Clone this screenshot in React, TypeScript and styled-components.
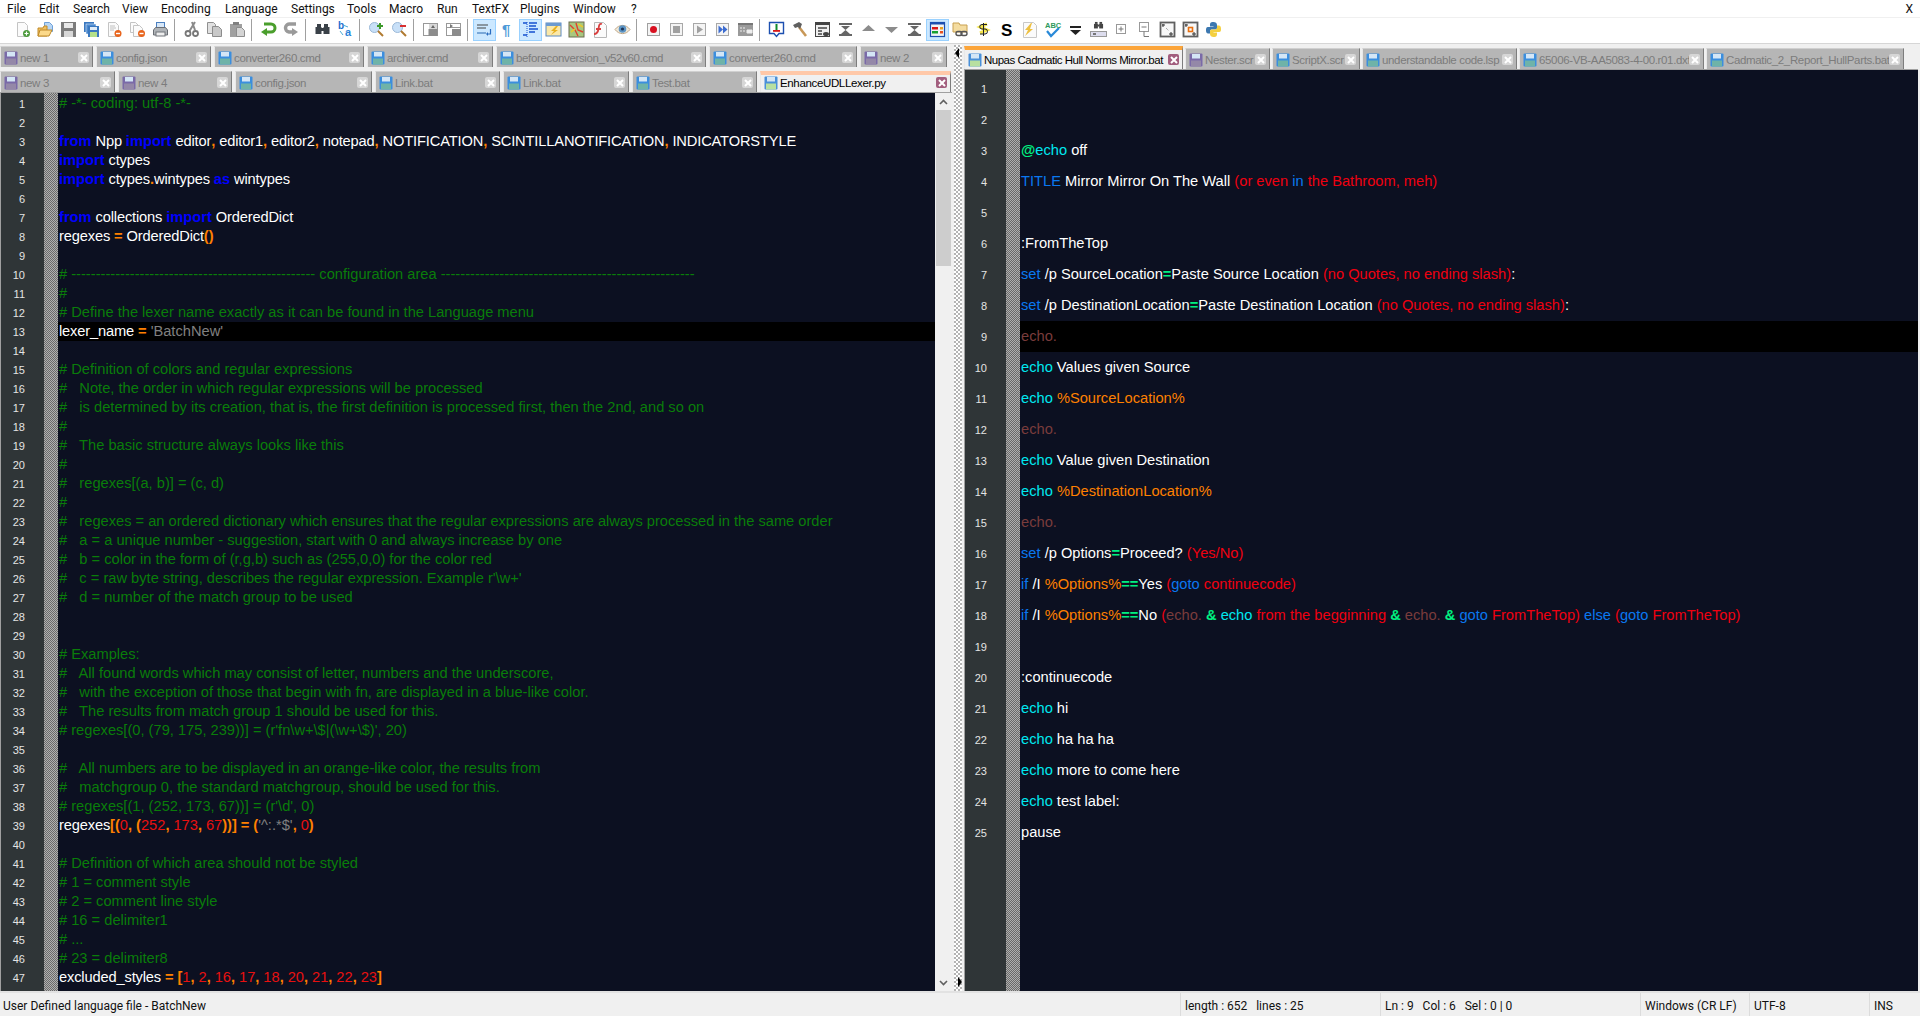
import React from "react";
import styled, { createGlobalStyle } from "styled-components";

const GlobalStyle = createGlobalStyle`
  html, body, #root {
    margin: 0;
    padding: 0;
    height: 100%;
    overflow: hidden;
  }
  body {
    background: #f0f0f0;
    font-family: "Liberation Sans", Arial, sans-serif;
  }
`;

const Window = styled.div`
  height: 100vh;
  display: flex;
  flex-direction: column;
`;

const MenuBar = styled.div`
  height: 17px;
  flex: none;
  display: flex;
  align-items: center;
  background: #fff;
  border-bottom: 1px solid #f0f0f0;
  font-family: Roboto, sans-serif;
  font-size: 12px;
  color: #111;
`;

const MenuItem = styled.span<{ $w: number }>`
  width: ${(p) => p.$w}px;
  flex: none;
  padding-left: 7px;
  box-sizing: border-box;
`;

const CloseApp = styled.span`
  margin-left: auto;
  margin-right: 7px;
  font-size: 12px;
`;

const ToolBar = styled.div`
  height: 26px;
  flex: none;
  box-sizing: border-box;
  display: flex;
  align-items: center;
  padding: 0 0 2px 10.5px;
  background: #fff;
  border-bottom: 1px solid #d6d6d6;
`;

const ToolButton = styled.div<{ $active?: boolean }>`
  width: 23px;
  height: 22px;
  flex: none;
  box-sizing: border-box;
  display: flex;
  align-items: center;
  justify-content: center;
  background: ${(p) => (p.$active ? "#cce8ff" : "transparent")};
  border: 1px solid ${(p) => (p.$active ? "#99d1ff" : "transparent")};
`;

const ToolSep = styled.div`
  width: 8px;
  height: 22px;
  flex: none;
  display: flex;
  justify-content: center;

  &::after {
    content: "";
    width: 1px;
    margin-right: 3px;
    background: #a0a0a0;
  }
`;

const Main = styled.div`
  flex: 1;
  min-height: 0;
  display: flex;
  margin-top: 1px;
`;

const Pane = styled.div<{ $grow?: boolean }>`
  display: flex;
  flex-direction: column;
  min-width: 0;
  ${(p) => (p.$grow ? "flex: 1; margin-right: 2px;" : "width: 952px; flex: none;")}
`;

const TabStrip = styled.div`
  flex: none;
  display: flex;
  flex-direction: column;
  padding-top: 1px;
  gap: 4px;
  border-bottom: 1px solid #a0a0a0;
`;

const TabRow = styled.div<{ $gap: number }>`
  display: flex;
  gap: ${(p) => p.$gap}px;
  align-items: flex-end;
`;

const Tab = styled.div<{ $w: number; $h?: number; $active?: string; $tight?: boolean }>`
  width: ${(p) => p.$w}px;
  height: ${(p) => p.$h ?? 21}px;
  flex: none;
  box-sizing: border-box;
  display: flex;
  align-items: center;
  gap: 2px;
  padding: ${(p) => (p.$active ? (p.$tight ? "0 3px 0 3px" : "0 3px 2px 3px") : "1px 3px 0 3px")};
  font-size: 11.5px;
  letter-spacing: ${(p) => (p.$tight ? "-0.5px" : "-0.35px")};
  overflow: hidden;
  white-space: nowrap;
  color: ${(p) => (p.$active ? "#000" : "#7c7c7c")};
  background: ${(p) => (p.$active ? "#f0f0f0" : "#b6b6b6")};
  border-top: ${(p) => (p.$active ? `4px solid ${p.$active}` : "1px solid #d0d0d0")};
  border-right: 1px solid #7d7d7d;
  border-left: 1px solid #e8e8e8;
`;

const TabLabel = styled.span`
  flex: 1;
  min-width: 0;
`;

const TabClose = styled.span<{ $active?: boolean }>`
  width: 11px;
  height: 11px;
  flex: none;
  border-radius: 2px;
  display: flex;
  align-items: center;
  justify-content: center;
  background: ${(p) => (p.$active ? "#a25e7e" : "#d6d6d6")};
`;

const Editor = styled.div<{ $top: number }>`
  flex: 1;
  min-height: 0;
  display: flex;
  overflow: hidden;
  background: #0c1021;
  border-left: 1px solid #a0a0a0;

  & > div:not([data-bar]) {
    padding-top: ${(p) => p.$top}px;
  }
`;

const Gutter = styled.div<{ $w: number }>`
  width: ${(p) => p.$w}px;
  flex: none;
  box-sizing: border-box;
  background: #2f3537;
  color: #e4e4e4;
  font-size: 11px;
  text-align: right;
  padding-right: 19px;
`;

const FoldMargin = styled.div`
  width: 14px;
  flex: none;
  background: repeating-conic-gradient(#6a6a6a 0 25%, #b0b0b0 0 50%) 0 0 / 2px 2px;
`;

const CodeColumn = styled.div`
  flex: 1;
  min-width: 0;
`;

const Line = styled.div<{ $h: number; $current?: boolean }>`
  height: ${(p) => p.$h}px;
  line-height: ${(p) => p.$h}px;
  white-space: pre;
  overflow: hidden;
  font-size: 14.67px;
  padding-left: 1px;
  color: #fff;
  background: ${(p) => (p.$current ? "#000" : "transparent")};
`;

const LineNo = styled.div<{ $h: number }>`
  height: ${(p) => p.$h}px;
  line-height: ${(p) => p.$h + 1}px;
`;

const tokenColors = {
  c: "#0a7d0a",
  k: "#0000ff",
  d: "#ffffff",
  p: "#ffffff",
  o: "#ff8000",
  s: "#808080",
  n: "#e81010",
  cy: "#00e8f0",
  bl: "#0a78f0",
  r: "#f00010",
  g: "#00f080",
  m: "#7a3c3c",
  v: "#ff8000",
};

type Kind = keyof typeof tokenColors;
type Tk = [Kind, string];

const Tok = styled.span<{ $k: Kind }>`
  color: ${(p) => tokenColors[p.$k]};
  font-weight: ${(p) => (p.$k === "o" || p.$k === "g" || p.$k === "k" ? "bold" : "normal")};
  letter-spacing: ${(p) => (p.$k === "p" ? "-0.15px" : "normal")};
`;

const ScrollBar = styled.div`
  width: 17px;
  flex: none;
  display: flex;
  flex-direction: column;
  background: #f0f0f0;
  margin-left: auto;
`;

const ScrollBtn = styled.div`
  height: 17px;
  flex: none;
  display: flex;
  align-items: center;
  justify-content: center;
`;

const ScrollThumb = styled.div`
  height: 156px;
  flex: none;
  margin: 0 1px;
  background: #cdcdcd;
`;

const ScrollTrack = styled.div`
  flex: 1;
`;

const Splitter = styled.div`
  width: 12px;
  flex: none;
  position: relative;
  background: #f0f0f0;

  &::before {
    content: "";
    position: absolute;
    left: 2px;
    top: 0;
    bottom: 0;
    width: 8px;
    background: repeating-conic-gradient(#fff 0 25%, #b4b4b4 0 50%) 0 0 / 4px 4px;
  }
`;

const SplitArrow = styled.span<{ $down?: boolean }>`
  position: absolute;
  left: 3px;
  width: 0;
  height: 0;
  border-top: 5px solid transparent;
  border-bottom: 5px solid transparent;
  ${(p) =>
    p.$down
      ? "bottom: 4px; left: 6px; border-left: 4px solid #000;"
      : "top: 3px; border-right: 4px solid #000;"}
`;

const StatusBar = styled.div`
  height: 23px;
  flex: none;
  display: flex;
  align-items: center;
  background: #f0f0f0;
  border-top: 2px solid #e2e2e2;
  font-family: Roboto, sans-serif;
  font-size: 12px;
  color: #111;
`;

const StatusCell = styled.div<{ $w: number; $first?: boolean }>`
  width: ${(p) => p.$w}px;
  height: 100%;
  flex: none;
  box-sizing: border-box;
  display: flex;
  align-items: center;
  white-space: pre;
  padding: 3px 0 0 ${(p) => (p.$first ? 3 : 4)}px;
  border-left: ${(p) => (p.$first ? "none" : "1px solid #dcdcdc")};
`;

const Floppy = ({ color = "#3b8ede", label = "#6fb3a8" }: { color?: string; label?: string }) => (
  <svg width="14" height="14" viewBox="0 0 14 14" style={{ flex: "none" }}>
    <rect x="0.5" y="0.5" width="13" height="13" rx="1" fill={color} />
    <rect x="3" y="1" width="8" height="4.5" fill="#d4e6f6" />
    <rect x="2" y="7.5" width="10" height="6" fill={label} />
  </svg>
);

const CloseMark = () => (
  <svg width="8" height="8" viewBox="0 0 8 8">
    <path d="M1 1l6 6M7 1L1 7" stroke="#fff" strokeWidth="2" />
  </svg>
);

const Chevron = ({ down }: { down?: boolean }) => (
  <svg width="9" height="6" viewBox="0 0 9 6">
    <path d={down ? "M1 1l3.5 3.5L8 1" : "M1 5l3.5-3.5L8 5"} fill="none" stroke="#606060" strokeWidth="1.6" />
  </svg>
);

const Ico = ({ children }: { children: React.ReactNode }) => (
  <svg width="17" height="17" viewBox="0 0 17 17" style={{ overflow: "visible" }}>
    {children}
  </svg>
);

const Page = ({ x = 2, y = 1, w = 10, h = 14, s = "#c4c4c4" }) => (
  <path d={`M${x + 0.5} ${y + 0.5}h${w - 3}l3 3v${h - 3}h-${w}z`} fill="#fbfbfb" stroke={s} />
);

const Bin = ({ c = "#3a4148" }) => (
  <g fill={c}>
    <rect x="3" y="3" width="4" height="3" />
    <rect x="10" y="3" width="4" height="3" />
    <rect x="1.5" y="6" width="6" height="7" />
    <rect x="9.5" y="6" width="6" height="7" />
    <rect x="7" y="7" width="3" height="3" />
  </g>
);

const icons: Record<string, React.ReactNode> = {
  newFile: (
    <>
      <Page x={3} w={10} h={14} />
      <circle cx="12.5" cy="12.5" r="3.5" fill="#4c9a3c" />
      <path d="M12.5 10.5v4M10.5 12.5h4" stroke="#fff" strokeWidth="1.2" />
    </>
  ),
  open: (
    <>
      <path d="M7.5 1.5h5l3 3v6h-8z" fill="#b8d6f4" stroke="#6ea0d8" />
      <path d="M1 7h5l1-2h3v10H1z" fill="#f0c060" stroke="#c08a28" />
      <path d="M1 15l2-6h12l-3 6z" fill="#fbd98a" stroke="#c08a28" />
    </>
  ),
  save: (
    <>
      <rect x="1" y="1" width="15" height="15" fill="#7c7c7c" />
      <rect x="4" y="2" width="9" height="5" fill="#e8e8e8" />
      <rect x="4" y="10" width="9" height="6" fill="#d8d8d8" />
    </>
  ),
  saveAll: (
    <>
      <rect x="1" y="1" width="10" height="10" fill="#3a78c0" />
      <rect x="3" y="3" width="10" height="10" fill="#4c8ad0" stroke="#fff" strokeWidth="0.5" />
      <rect x="5" y="5" width="11" height="11" fill="#3a78c0" />
      <rect x="7" y="6" width="7" height="3" fill="#e0ecf8" />
      <rect x="7" y="11" width="7" height="5" fill="#b4e08a" />
    </>
  ),
  close: (
    <>
      <Page x={2} w={10} h={14} />
      <path d="M4 5h5M4 7h6M4 9h4" stroke="#c0c0c0" />
      <circle cx="12" cy="12.5" r="3.5" fill="#e8641c" />
      <path d="M10 12.5h4" stroke="#fff" strokeWidth="1.4" />
    </>
  ),
  closeAll: (
    <>
      <Page x={1} w={8} h={10} />
      <Page x={4} y={4} w={9} h={11} />
      <circle cx="12.5" cy="12.5" r="3.5" fill="#e8641c" />
      <path d="M10.5 12.5h4" stroke="#fff" strokeWidth="1.4" />
    </>
  ),
  print: (
    <>
      <rect x="4.5" y="1.5" width="8" height="6" fill="#d8e8f8" stroke="#4c80c0" />
      <path d="M1.5 9l2-2.500h10l2 2.500v5h-14z" fill="#b0b4b8" stroke="#6a6e74" />
      <rect x="4" y="11" width="9" height="4" fill="#eee" stroke="#70747a" />
    </>
  ),
  cut: (
    <>
      <path d="M12 1L6.500 10M9 1l3 8" stroke="#8a8a8a" strokeWidth="2" fill="none" />
      <circle cx="5" cy="12.500" r="2.500" fill="none" stroke="#777" strokeWidth="1.800" />
      <circle cx="12.500" cy="12.500" r="2.500" fill="none" stroke="#777" strokeWidth="1.800" />
    </>
  ),
  copy: (
    <>
      <path d="M1.500 1.500h6l2 2v9h-8z" fill="#e0e0e0" stroke="#909090" />
      <path d="M6.500 5.500h6l3 3v7h-9z" fill="#c8c8c8" stroke="#8c8c8c" />
    </>
  ),
  paste: (
    <>
      <rect x="1" y="3" width="12" height="13" fill="#a0a0a0" />
      <rect x="4" y="1" width="6" height="3" fill="#808080" />
      <path d="M7.500 6.500h5l3 3v6h-8z" fill="#d4d4d4" stroke="#8c8c8c" />
    </>
  ),
  undo: (
    <>
      <path d="M4 3h7a3.500 3.500 0 0 1 0 8H6" fill="none" stroke="#4a9e2c" strokeWidth="3" />
      <path d="M7 7v8L1 11z" fill="#4a9e2c" />
    </>
  ),
  redo: (
    <>
      <path d="M13 3H7a3.500 3.500 0 0 0-1 8h3" fill="none" stroke="#9a9a9a" strokeWidth="3.400" />
      <path d="M9 7v8l6-4z" fill="#9a9a9a" />
    </>
  ),
  find: <Bin />,
  replace: (
    <>
      <text x="1" y="8" fontSize="10" fontWeight="bold" fill="#1c6fd0">b</text>
      <text x="8" y="15" fontSize="11" fontWeight="bold" fill="#2a82d8">a</text>
      <path d="M3 10l3 4M6 4l5 2" stroke="#4caad8" fill="none" />
    </>
  ),
  zoomIn: (
    <>
      <circle cx="6.500" cy="6.500" r="5" fill="#c8e0f8" stroke="#9ab8d8" />
      <path d="M10 10l5 5" stroke="#b07a30" strokeWidth="2" />
      <path d="M12 2v6M9 5h6" stroke="#3c9a2c" strokeWidth="2" />
    </>
  ),
  zoomOut: (
    <>
      <circle cx="6.500" cy="6.500" r="5" fill="#c8e0f8" stroke="#9ab8d8" />
      <path d="M10 10l5 5" stroke="#b07a30" strokeWidth="2" />
      <path d="M9 5h6" stroke="#d83030" strokeWidth="2" />
    </>
  ),
  syncV: (
    <>
      <rect x="1.500" y="2.500" width="14" height="12" fill="none" stroke="#999" />
      <path d="M7 3h8v11H7z" fill="#d8d8d8" />
      <rect x="6.500" y="8" width="9" height="7" fill="#8c8c8c" />
      <path d="M9 7l2-3 2 3z" fill="#666" />
    </>
  ),
  syncH: (
    <>
      <rect x="1.500" y="2.500" width="14" height="12" fill="none" stroke="#999" />
      <rect x="1" y="6" width="15" height="1" fill="#999" />
      <rect x="7" y="8" width="9" height="7" fill="#8c8c8c" />
      <path d="M5 3l3 2-3 2z" fill="#777" />
    </>
  ),
  wrap: (
    <>
      <path d="M1 4h11M1 7h9" stroke="#444" strokeWidth="1.200" />
      <rect x="1" y="11" width="9" height="2" fill="#7aa8d8" />
      <path d="M14.500 8v5H11" fill="none" stroke="#2a6cc0" strokeWidth="1.200" />
      <path d="M12 11v4l-2-2z" fill="#2a6cc0" />
    </>
  ),
  para: <text x="3" y="14" fontSize="15" fontWeight="bold" fill="#4f9ad8">¶</text>,
  indent: (
    <>
      <path d="M5 1v15" stroke="#1450d0" strokeDasharray="1 1" />
      <path d="M1 2h4M7 2h8M7 5h7M7 8h9M7 11h6M1 14h4" stroke="#1450d0" strokeWidth="1.600" />
    </>
  ),
  udl: (
    <>
      <rect x="1" y="2" width="15" height="13" fill="#fbe8a8" stroke="#5c8ac0" />
      <rect x="1" y="2" width="15" height="3" fill="#6c9ad0" />
      <path d="M11 5L6 10h3l-3 4 7-5h-3l3-4z" fill="#e8b020" />
    </>
  ),
  map: (
    <>
      <rect x="1" y="1" width="15" height="15" fill="#a8c880" stroke="#6c6c50" />
      <path d="M2 4l5 5 3 6M8 2l2 7 5 2" fill="none" stroke="#e04030" strokeWidth="1.400" />
      <path d="M3 11l4-3M10 3l5 3" stroke="#e8c830" strokeWidth="1.600" />
    </>
  ),
  func: (
    <>
      <Page x={3} w={12} h={15} s="#b8b8b8" />
      <path d="M11 3c-3-1-3 2-3.500 5S6 13 3 13M5 8h5" fill="none" stroke="#d84040" strokeWidth="1.800" />
    </>
  ),
  eye: (
    <>
      <path d="M1 8.500C5 3 12 3 16 8.500 12 14 5 14 1 8.500z" fill="#f0e8d8" stroke="#c0a888" />
      <circle cx="8.500" cy="8" r="3.800" fill="#5c94c4" />
      <circle cx="8.500" cy="8" r="1.600" fill="#1c3458" />
    </>
  ),
  record: (
    <>
      <rect x="2.500" y="2.500" width="12" height="12" fill="#f4f4f4" stroke="#a0a0a0" />
      <circle cx="8.500" cy="8.500" r="3.500" fill="#d81020" />
    </>
  ),
  stop: (
    <>
      <rect x="2.500" y="2.500" width="12" height="12" fill="#f4f4f4" stroke="#a8a8a8" />
      <rect x="5" y="5" width="7" height="7" fill="#a0a0a0" />
    </>
  ),
  play: (
    <>
      <rect x="2.500" y="2.500" width="12" height="12" fill="#f4f4f4" stroke="#a8a8a8" />
      <path d="M6 4.500l6 4-6 4z" fill="#a0a0a0" />
    </>
  ),
  playMany: (
    <>
      <rect x="2.500" y="2.500" width="12" height="12" fill="#f4f4f4" stroke="#a8a8a8" />
      <path d="M4.500 4.500l4.500 4-4.500 4zM9 4.500l4.500 4-4.500 4z" fill="#3c6cd0" />
    </>
  ),
  saveMacro: (
    <>
      <rect x="1" y="2" width="15" height="13" fill="#9a9a9a" />
      <rect x="1" y="2" width="15" height="2" fill="#777" />
      <path d="M3 7h2M6 7h2M3 10h2M6 10h2M10 9h5v3h-5z" stroke="#eee" fill="#eee" />
    </>
  ),
  bubble: (
    <>
      <path d="M1.500 1.500h14v11h-4.500l-2.500 3-2.500-3h-4.500z" fill="#fff" stroke="#1c4fb0" strokeWidth="1.400" />
      <rect x="7.500" y="3" width="2" height="6" fill="#118a2c" />
      <rect x="5" y="9" width="7" height="1.800" fill="#d81818" />
    </>
  ),
  hammer: (
    <>
      <path d="M8 6l7 9" stroke="#c89858" strokeWidth="2.600" />
      <path d="M2 4l6-3 3 2-2 5-2-2-3 1z" fill="#606060" />
    </>
  ),
  panel: (
    <>
      <rect x="1.500" y="1.500" width="14" height="14" fill="#f0f0f0" stroke="#444" />
      <rect x="1" y="1" width="15" height="3" fill="#444" />
      <path d="M4 7h9M4 10h4M4 13h4" stroke="#444" strokeWidth="1.400" />
      <ellipse cx="12" cy="13" rx="3" ry="2" fill="#444" />
    </>
  ),
  hourA: <path d="M2 2h13v2H2zM4 5h9L8.500 9zM8.500 9l4.500 4H4zM2 13h13v2H2z" fill="#666" />,
  up: <path d="M8.500 4l6.500 6H2z" fill="#8c8c8c" />,
  down: <path d="M2 6h13l-6.500 6z" fill="#8c8c8c" />,
  active: (
    <>
      <rect x="1.500" y="1.500" width="14" height="14" fill="#f4f4f4" stroke="#1c4fb0" strokeWidth="1.200" />
      <rect x="1" y="1" width="15" height="2.500" fill="#1c4fb0" />
      <rect x="3" y="6" width="6" height="2.500" fill="#d81818" />
      <rect x="3" y="10" width="6" height="2.500" fill="#18a030" />
      <rect x="11" y="6" width="3" height="2.500" fill="#e8a020" />
      <rect x="11" y="10" width="3" height="2.500" fill="#e85020" />
    </>
  ),
  chain: (
    <>
      <path d="M1 2h6l1 2h7v7H1z" fill="#f4dca0" stroke="#c8a050" />
      <rect x="4" y="10.500" width="6" height="4" rx="2" fill="none" stroke="#555" strokeWidth="1.400" />
      <rect x="9" y="10.500" width="6" height="4" rx="2" fill="none" stroke="#555" strokeWidth="1.400" />
    </>
  ),
  dollar: (
    <>
      <path d="M12 3L5 6l7 3-7 3" fill="none" stroke="#f4e44c" strokeWidth="3" />
      <path d="M12 3.500H7a2 2 0 0 0 0 4.500h3a2.500 2.500 0 0 1 0 5H5M8.500 2v13" fill="none" stroke="#222" strokeWidth="1" />
    </>
  ),
  esS: <text x="3" y="15" fontSize="17" fontWeight="bold" fill="#000" fontFamily="Liberation Sans">S</text>,
  bolt: (
    <>
      <Page x={2} w={13} h={15} s="#c8c8c8" />
      <path d="M10 2L4 9h3l-3 6 8-7H9l2-6z" fill="#eec040" />
    </>
  ),
  spell: (
    <>
      <text x="1" y="7" fontSize="7.500" fontWeight="bold" fill="#2e9a5c">ABC</text>
      <path d="M3 10l4 5 8-8" fill="none" stroke="#2a8ad8" strokeWidth="2.200" />
    </>
  ),
  drop: (
    <>
      <rect x="3" y="5" width="11" height="2" fill="#222" />
      <path d="M3 9h11l-5.500 5z" fill="#222" />
    </>
  ),
  binInput: (
    <>
      <g transform="translate(3 -1) scale(0.65)"><Bin c="#444" /></g>
      <rect x="0.500" y="10.500" width="16" height="5" fill="#dde" stroke="#999" />
      <rect x="3" y="12" width="3" height="2" fill="#777" />
    </>
  ),
  plusBox: (
    <>
      <rect x="3.500" y="3.500" width="9" height="9" fill="none" stroke="#999" />
      <path d="M8 5.500v5M5.500 8h5" stroke="#777" />
    </>
  ),
  minusBox: (
    <>
      <rect x="3.500" y="1.500" width="9" height="9" fill="none" stroke="#999" />
      <path d="M5.500 6h5M8 10.500v5h5" stroke="#777" fill="none" />
    </>
  ),
  dotBox: (
    <>
      <rect x="1.500" y="1.500" width="14" height="14" fill="#f8f8f8" stroke="#606060" strokeWidth="1.800" />
      <path d="M4 3v3M3 4h3M12 11v4M10 13h4" stroke="#333" />
      <path d="M7 7l3 3" stroke="#888" strokeDasharray="1 1" />
    </>
  ),
  orangeBox: (
    <>
      <rect x="1.500" y="1.500" width="14" height="14" fill="#f8f8f8" stroke="#606060" strokeWidth="1.800" />
      <path d="M4 3v3M3 4h3M12 11v4M10 13h4" stroke="#333" />
      <rect x="6.500" y="6.500" width="4" height="4" fill="none" stroke="#e87010" strokeWidth="1.600" />
    </>
  ),
  python: (
    <>
      <path d="M8.500 1C5 1 5 2.500 5 4v1.500h3.500V6H3C1 6 1 8 1 9s0 3.500 2.500 3.500H5V10.500C5 9 6 8.500 7 8.500h3.500c1 0 1.500-1 1.500-2V4c0-2-1.500-3-3.500-3z" fill="#3c78b0" />
      <path d="M8.500 16c3.500 0 3.500-1.500 3.500-3v-1.500H8.500V11H14c2 0 2-2 2-3s0-3.500-2.500-3.500H12V6.500c0 1.500-1 2-2 2H6.500c-1 0-1.500 1-1.500 2V13c0 2 1.500 3 3.500 3z" fill="#f4d040" />
    </>
  ),
};

const toolbarGroups: (string | [string])[][] = [
  ["newFile", "open", "save", "saveAll", "close", "closeAll", "print"],
  ["cut", "copy", "paste"],
  ["undo", "redo"],
  ["find", "replace"],
  ["zoomIn", "zoomOut"],
  ["syncV", "syncH"],
  [["wrap"], "para", ["indent"], "udl", "map", "func", "eye"],
  ["record", "stop", "play", "playMany", "saveMacro"],
  ["bubble", "hammer", "panel", "hourA", "up", "down", "hourA", ["active"], "chain", "dollar", "esS", "bolt", "spell", "drop", "binInput", "plusBox", "minusBox", "dotBox", "orangeBox", "python"],
];

const menus: [string, number][] = [
  ["File", 32],
  ["Edit", 34],
  ["Search", 49],
  ["View", 39],
  ["Encoding", 64],
  ["Language", 66],
  ["Settings", 56],
  ["Tools", 42],
  ["Macro", 48],
  ["Run", 35],
  ["TextFX", 48],
  ["Plugins", 53],
  ["Window", 58],
  ["?", 20],
];

type TabDef = { name: string; w: number; unsaved?: boolean };

const rowOne: TabDef[] = [
  { name: "new 1", w: 93, unsaved: true },
  { name: "config.json", w: 115 },
  { name: "converter260.cmd", w: 150 },
  { name: "archiver.cmd", w: 126 },
  { name: "beforeconversion_v52v60.cmd", w: 210 },
  { name: "converter260.cmd", w: 148 },
  { name: "new 2", w: 87, unsaved: true },
];

const rowTwo: TabDef[] = [
  { name: "new 3", w: 115, unsaved: true },
  { name: "new 4", w: 114, unsaved: true },
  { name: "config.json", w: 137 },
  { name: "Link.bat", w: 125 },
  { name: "Link.bat", w: 126 },
  { name: "Test.bat", w: 125 },
];

const rightTabs: TabDef[] = [
  { name: "Nester.scr", w: 85, unsaved: true },
  { name: "ScriptX.scr", w: 88 },
  { name: "understandable code.lsp", w: 155 },
  { name: "65006-VB-AA5083-4-00.r01.dxf", w: 185 },
  { name: "Cadmatic_2_Report_HullParts.bat", w: 198 },
];

const dashesA = "-".repeat(50);
const dashesB = "-".repeat(52);

const pyLines: (string | Tk[])[] = [
  "# -*- coding: utf-8 -*-",
  "",
  [["k", "from"], ["p", " Npp "], ["k", "import"], ["p", " editor"], ["o", ","], ["p", " editor1"], ["o", ","], ["p", " editor2"], ["o", ","], ["p", " notepad"], ["o", ","], ["p", " NOTIFICATION"], ["o", ","], ["p", " SCINTILLANOTIFICATION"], ["o", ","], ["p", " INDICATORSTYLE"]],
  [["k", "import"], ["p", " ctypes"]],
  [["k", "import"], ["p", " ctypes"], ["o", "."], ["p", "wintypes "], ["k", "as"], ["p", " wintypes"]],
  "",
  [["k", "from"], ["p", " collections "], ["k", "import"], ["p", " OrderedDict"]],
  [["p", "regexes "], ["o", "="], ["p", " OrderedDict"], ["o", "()"]],
  "",
  `# ${dashesA} configuration area ${dashesB}`,
  "#",
  "# Define the lexer name exactly as it can be found in the Language menu",
  [["p", "lexer_name "], ["o", "="], ["s", " 'BatchNew'"]],
  "",
  "# Definition of colors and regular expressions",
  "#   Note, the order in which regular expressions will be processed",
  "#   is determined by its creation, that is, the first definition is processed first, then the 2nd, and so on",
  "#",
  "#   The basic structure always looks like this",
  "#",
  "#   regexes[(a, b)] = (c, d)",
  "#",
  "#   regexes = an ordered dictionary which ensures that the regular expressions are always processed in the same order",
  "#   a = a unique number - suggestion, start with 0 and always increase by one",
  "#   b = color in the form of (r,g,b) such as (255,0,0) for the color red",
  "#   c = raw byte string, describes the regular expression. Example r'\\w+'",
  "#   d = number of the match group to be used",
  "",
  "",
  "# Examples:",
  "#   All found words which may consist of letter, numbers and the underscore,",
  "#   with the exception of those that begin with fn, are displayed in a blue-like color.",
  "#   The results from match group 1 should be used for this.",
  "# regexes[(0, (79, 175, 239))] = (r'fn\\w+\\$|(\\w+\\$)', 20)",
  "",
  "#   All numbers are to be displayed in an orange-like color, the results from",
  "#   matchgroup 0, the standard matchgroup, should be used for this.",
  "# regexes[(1, (252, 173, 67))] = (r'\\d', 0)",
  [["p", "regexes"], ["o", "[("], ["n", "0"], ["o", ","], ["p", " "], ["o", "("], ["n", "252"], ["o", ","], ["p", " "], ["n", "173"], ["o", ","], ["p", " "], ["n", "67"], ["o", "))]"], ["p", " "], ["o", "="], ["p", " "], ["o", "("], ["s", "'^:.*$'"], ["o", ","], ["p", " "], ["n", "0"], ["o", ")"]],
  "",
  "# Definition of which area should not be styled",
  "# 1 = comment style",
  "# 2 = comment line style",
  "# 16 = delimiter1",
  "# ...",
  "# 23 = delimiter8",
  [["p", "excluded_styles "], ["o", "="], ["p", " "], ["o", "["], ["n", "1"], ["o", ","], ["p", " "], ["n", "2"], ["o", ","], ["p", " "], ["n", "16"], ["o", ","], ["p", " "], ["n", "17"], ["o", ","], ["p", " "], ["n", "18"], ["o", ","], ["p", " "], ["n", "20"], ["o", ","], ["p", " "], ["n", "21"], ["o", ","], ["p", " "], ["n", "22"], ["o", ","], ["p", " "], ["n", "23"], ["o", "]"]],
];

const echoLine = (text: string): Tk[] => [["cy", "echo"], ["d", " " + text]];
const echoVar = (name: string): Tk[] => [["cy", "echo"], ["d", " "], ["v", name]];
const setLine = (name: string, value: string): Tk[] => [["bl", "set"], ["d", ` /p ${name}`], ["g", "="], ["d", value]];
const noQuotes: Tk[] = [["d", " "], ["r", "(no Quotes, no ending slash)"], ["d", ":"]];
const blank: Tk[] = [];
const dot: Tk[] = [["m", "echo."]];

const batLines: Tk[][] = [
  blank,
  blank,
  [["g", "@"], ["cy", "echo"], ["d", " off"]],
  [["bl", "TITLE"], ["d", " Mirror Mirror On The Wall "], ["r", "(or even "], ["bl", "in"], ["r", " the Bathroom, meh)"]],
  blank,
  [["d", ":FromTheTop"]],
  [...setLine("SourceLocation", "Paste Source Location"), ...noQuotes],
  [...setLine("DestinationLocation", "Paste Destination Location"), ...noQuotes],
  dot,
  echoLine("Values given Source"),
  echoVar("%SourceLocation%"),
  dot,
  echoLine("Value given Destination"),
  echoVar("%DestinationLocation%"),
  dot,
  [...setLine("Options", "Proceed? "), ["r", "(Yes/No)"]],
  [["bl", "if"], ["d", " /I "], ["v", "%Options%"], ["g", "=="], ["d", "Yes "], ["r", "("], ["bl", "goto"], ["r", " continuecode)"]],
  [["bl", "if"], ["d", " /I "], ["v", "%Options%"], ["g", "=="], ["d", "No "], ["r", "("], ["m", "echo. "], ["g", "&"], ["cy", " echo"], ["r", " from the begginning "], ["g", "&"], ["m", " echo. "], ["g", "&"], ["bl", " goto"], ["r", " FromTheTop)"], ["bl", " else "], ["r", "("], ["bl", "goto"], ["r", " FromTheTop)"]],
  blank,
  [["d", ":continuecode"]],
  echoLine("hi"),
  echoLine("ha ha ha"),
  echoLine("more to come here"),
  echoLine("test label:"),
  [["d", "pause"]],
];

const FileTab = ({ tab }: { tab: TabDef }) => (
  <Tab $w={tab.w}>
    <Floppy color={tab.unsaved ? "#7a6aa8" : "#3b8ede"} label={tab.unsaved ? "#9488a8" : "#6fb3a8"} />
    <TabLabel>{tab.name}</TabLabel>
    <TabClose>
      <CloseMark />
    </TabClose>
  </Tab>
);

const ActiveTab = ({ name, w, h, accent, tight }: { name: string; w: number; h: number; accent: string; tight?: boolean }) => (
  <Tab $w={w} $h={h} $active={accent} $tight={tight}>
    <Floppy color="#4a90d8" label="#b8e0a0" />
    <TabLabel>{name}</TabLabel>
    <TabClose $active>
      <CloseMark />
    </TabClose>
  </Tab>
);

const renderTokens = (tokens: Tk[]) =>
  tokens.map(([k, text], i) => (
    <Tok key={i} $k={k}>
      {text}
    </Tok>
  ));

const App = () => (
  <Window>
    <GlobalStyle />
    <MenuBar>
      {menus.map(([label, w]) => (
        <MenuItem key={label} $w={w}>
          {label}
        </MenuItem>
      ))}
      <CloseApp>X</CloseApp>
    </MenuBar>
    <ToolBar>
      {toolbarGroups.map((group, g) => (
        <React.Fragment key={g}>
          {g > 0 && <ToolSep />}
          {group.map((item, i) => {
            const name = typeof item === "string" ? item : item[0];
            return (
              <ToolButton key={i} $active={typeof item !== "string"}>
                <Ico>{icons[name]}</Ico>
              </ToolButton>
            );
          })}
        </React.Fragment>
      ))}
    </ToolBar>
    <Main>
      <Pane>
        <TabStrip>
          <TabRow $gap={3}>
            {rowOne.map((t, i) => (
              <FileTab key={i} tab={t} />
            ))}
          </TabRow>
          <TabRow $gap={3}>
            {rowTwo.map((t, i) => (
              <FileTab key={i} tab={t} />
            ))}
            <ActiveTab name="EnhanceUDLLexer.py" w={191} h={21} accent="#ffc8a8" />
          </TabRow>
        </TabStrip>
        <Editor $top={1}>
          <Gutter $w={43}>
            {pyLines.map((_, i) => (
              <LineNo key={i} $h={19}>
                {i + 1}
              </LineNo>
            ))}
          </Gutter>
          <FoldMargin />
          <CodeColumn>
            {pyLines.map((line, i) => (
              <Line key={i} $h={19} $current={i === 12}>
                {typeof line === "string" ? <Tok $k="c">{line}</Tok> : renderTokens(line)}
              </Line>
            ))}
          </CodeColumn>
          <ScrollBar data-bar>
            <ScrollBtn>
              <Chevron />
            </ScrollBtn>
            <ScrollThumb />
            <ScrollTrack />
            <ScrollBtn>
              <Chevron down />
            </ScrollBtn>
          </ScrollBar>
        </Editor>
      </Pane>
      <Splitter>
        <SplitArrow />
        <SplitArrow $down />
      </Splitter>
      <Pane $grow>
        <TabStrip>
          <TabRow $gap={2}>
            <ActiveTab name="Nupas Cadmatic Hull Norms Mirror.bat" w={219} h={23} accent="#fca53a" tight />
            {rightTabs.map((t, i) => (
              <FileTab key={i} tab={t} />
            ))}
          </TabRow>
        </TabStrip>
        <Editor $top={3}>
          <Gutter $w={41}>
            {batLines.map((_, i) => (
              <LineNo key={i} $h={31}>
                {i + 1}
              </LineNo>
            ))}
          </Gutter>
          <FoldMargin />
          <CodeColumn>
            {batLines.map((line, i) => (
              <Line key={i} $h={31} $current={i === 8}>
                {renderTokens(line)}
              </Line>
            ))}
          </CodeColumn>
        </Editor>
      </Pane>
    </Main>
    <StatusBar>
      <StatusCell $w={1180} $first>User Defined language file - BatchNew</StatusCell>
      <StatusCell $w={200}>{"length : 652   lines : 25"}</StatusCell>
      <StatusCell $w={260}>{"Ln : 9   Col : 6   Sel : 0 | 0"}</StatusCell>
      <StatusCell $w={109}>Windows (CR LF)</StatusCell>
      <StatusCell $w={120}>UTF-8</StatusCell>
      <StatusCell $w={31}>INS</StatusCell>
    </StatusBar>
  </Window>
);

export default App;
